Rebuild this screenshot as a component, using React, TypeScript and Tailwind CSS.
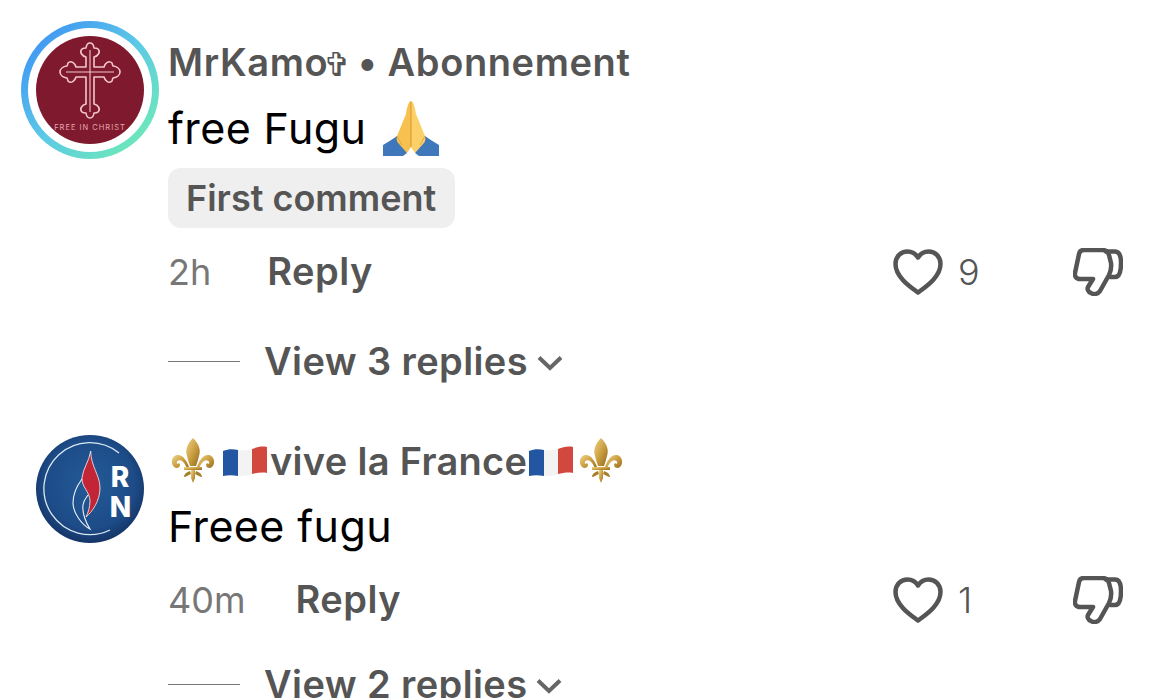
const font = "font-['Inter','Liberation_Sans',sans-serif]";

const ChristAvatar = () => (
  <div className="w-[138px] h-[138px] shrink-0 rounded-full p-[7px] bg-[linear-gradient(135deg,#3f95f4_10%,#5cc9e6_50%,#6eeab6_90%)]">
    <div className="w-full h-full rounded-full bg-white p-[8px]">
      <svg viewBox="0 0 108 108" className="w-[108px] h-[108px] block">
        <circle cx="54" cy="54" r="54" fill="#7f1a2e" />
        <path
          d="M50 31V21C46 20 43 16 46 13C47 12 48.500 12 50 12C50.500 8 52 7 54 7C56 7 57.500 8 58 12C59.500 12 61 12 62 13C65 16 62 20 58 21V31H68C69 27 73 24 76 27C76.500 28.500 76.500 29 77 30C81 30.500 84 33 84 36C84 39 81 41.500 77 42C76.500 43 76.500 43.500 76 45C73 48 69 45 68 41H58V68C62 69 65 73 62 76C61 77 59.500 77 58 77C57.500 81 56 82 54 82C52 82 50.500 81 50 77C48.500 77 47 77 46 76C43 73 46 69 50 68V41H40C39 45 35 48 32 45C31.500 43.500 31.500 43 31 42C27 41.500 24 39 24 36C24 33 27 30.500 31 30C31.500 29 31.500 28.500 32 27C35 24 39 27 40 31Z"
          fill="none"
          stroke="#f3c6cd"
          strokeWidth="1.600"
          strokeLinejoin="round"
        />
        <path d="M54 14V76M30 36H78" stroke="#f3c6cd" strokeWidth="1.100" />
        <text x="54" y="94" textAnchor="middle" fill="#e5a6af" fontSize="7.500" letterSpacing="1" fontFamily="Inter, sans-serif">
          FREE IN CHRIST
        </text>
      </svg>
    </div>
  </div>
);

const RnAvatar = () => (
  <div className="w-[138px] h-[138px] shrink-0 flex items-center justify-center">
    <svg viewBox="0 0 108 108" className="w-[108px] h-[108px] block">
      <defs>
        <radialGradient id="rn" cx="50%" cy="45%" r="55%">
          <stop offset="0%" stopColor="#235a97" />
          <stop offset="75%" stopColor="#1d4c88" />
          <stop offset="100%" stopColor="#153567" />
        </radialGradient>
      </defs>
      <circle cx="54" cy="54" r="54" fill="url(#rn)" />
      <path d="M83 18A46 46 0 1 0 74 95" fill="none" stroke="#dbe8f3" strokeWidth="1.300" />
      <path d="M54.700 16C53 27 47 33 46 43C45.500 52 54 57 54 66C54 72 52 78 50 82C56 77 64 66 64 53C64 40 55 32 54.700 16Z" fill="#c22535" stroke="#f4f4f4" strokeWidth="0.800" />
      <path d="M46 44C40 52 37 60 37 68C37 78 46 90 54 94C50 88 46 78 47 70C48 64 51 62 52 60" fill="none" stroke="#eef3f8" strokeWidth="1.100" />
      <text x="84" y="52" textAnchor="middle" fill="#fff" fontSize="28" fontWeight="800" fontFamily="Inter, sans-serif">R</text>
      <text x="84.500" y="82" textAnchor="middle" fill="#fff" fontSize="28" fontWeight="800" fontFamily="Inter, sans-serif">N</text>
    </svg>
  </div>
);

const Praying = () => (
  <svg viewBox="0 0 56 56" className="w-[56px] h-[56px] block ml-[17px] shrink-0">
    <path d="M0 45C5 42 10 39 14 36L24 53L20 56H0Z" fill="#3f77bb" />
    <path d="M56 45C51 42 46 39 42 36L32 53L36 56H56Z" fill="#3f77bb" />
    <path d="M28 1C25 2 24 8 23 14L14 36C13 40 14 42 16 44L24 53L28 47Z" fill="#f7c14f" />
    <path d="M28 1C31 2 32 8 33 14L42 36C43 40 42 42 40 44L32 53L28 47Z" fill="#fbd068" />
    <path d="M28 2V47" stroke="#d9962c" strokeWidth="1" />
    <path d="M14 36L19 45M42 36L37 45" stroke="#e6a63c" strokeWidth="1" />
  </svg>
);

const Fleur = () => (
  <svg viewBox="0 0 44 46" className="w-[44px] h-[46px] block shrink-0">
    <defs>
      <linearGradient id="gold" x1="0" y1="0" x2="1" y2="1">
        <stop offset="0%" stopColor="#f1d487" />
        <stop offset="55%" stopColor="#c79a3c" />
        <stop offset="100%" stopColor="#8f6a20" />
      </linearGradient>
    </defs>
    <path d="M22 0C16 6 14 12 16 18C17 22 18 25 19 28H25C26 25 27 22 28 18C30 12 28 6 22 0Z" fill="url(#gold)" />
    <path d="M18 29C16 22 11 16 6 17C1 18 -1 25 3 29C5 31 9 30 9 27C9 25 7 25 6 26C5 23 8 21 11 23C14 25 15 28 16 31Z" fill="url(#gold)" />
    <path d="M26 29C28 22 33 16 38 17C43 18 45 25 41 29C39 31 35 30 35 27C35 25 37 25 38 26C39 23 36 21 33 23C30 25 29 28 28 31Z" fill="url(#gold)" />
    <path d="M13 29H31V32H13Z" fill="url(#gold)" />
    <path d="M20 32H24V40L22 45L20 40Z" fill="url(#gold)" />
    <path d="M19 33C16 34 13 36 13 39C15 39 17 37 20 36ZM25 33C28 34 31 36 31 39C29 39 27 37 24 36Z" fill="#a67f2c" />
  </svg>
);

const Flag = () => (
  <svg viewBox="0 0 44 31" className="w-[44px] h-[31px] block shrink-0">
    <path d="M0 5C5 3 10 3 15 4V30C10 29 5 29 0 30Z" fill="#2356a2" />
    <path d="M15 4C19 5 25 4 29 3V28C25 30 19 30 15 30Z" fill="#f3f3f3" />
    <path d="M29 3C34 1 39 0 44 1V27C39 26 34 27 29 28Z" fill="#d3483e" />
  </svg>
);

const Heart = () => (
  <svg viewBox="0 0 50 46" className="w-[50px] h-[46px] block shrink-0">
    <path
      d="M25 43.500C20 39.500 2.500 29 2.500 15C2.500 7.500 8 2.500 14.500 2.500C19 2.500 22.500 4.500 25 8.500C27.500 4.500 31 2.500 35.500 2.500C42 2.500 47.500 7.500 47.500 15C47.500 29 30 39.500 25 43.500Z"
      fill="none"
      stroke="#555555"
      strokeWidth="4.500"
      strokeLinejoin="round"
    />
  </svg>
);

const ThumbDown = () => (
  <svg viewBox="0 0 50 48" className="w-[50px] h-[48px] block shrink-0">
    <path
      d="M11 2H29C33 2 35 3.500 36 7L38 15C38.500 19 38 23 36 27L27 43C25 46 21 47 18 45C15 44 14 41 15 39L20 31H7C3 31 1.500 28 2 25L6 6C6.500 3.500 8 2 11 2Z"
      fill="none"
      stroke="#555555"
      strokeWidth="4.500"
      strokeLinejoin="round"
    />
    <path d="M33 3.500H42C46 3.500 48 8 48 15C48 24 46 29 42 29H37" fill="none" stroke="#555555" strokeWidth="4.500" strokeLinecap="round" />
  </svg>
);

const Actions = ({ time, count, gap }: { time: string; count: string; gap: string }) => (
  <div className="h-[40px] flex items-center justify-between w-[955px]">
    <div className={`flex items-center ${gap}`}>
      <span className="text-[36px] text-[#777777] font-normal">{time}</span>
      <span className="text-[38px] tracking-[0.5px] text-[#555555] font-semibold mb-[2px]">Reply</span>
    </div>
    <div className="flex items-center">
      <Heart />
      <span className="w-[130px] pl-[15px] text-[36px] font-light text-[#555555]">{count}</span>
      <ThumbDown />
    </div>
  </div>
);

const ViewReplies = ({ label }: { label: string }) => (
  <div className="h-[40px] flex items-center">
    <div className="w-[72px] h-px bg-[#777777]" />
    <span className="ml-[24px] text-[38px] tracking-[0.4px] font-semibold text-[#555555]">{label}</span>
    <svg viewBox="0 0 26 16" className="ml-[9px] mt-[4px] w-[26px] h-[16px] block">
      <path d="M2 2.500L13 13L24 2.500" fill="none" stroke="#666666" strokeWidth="4" />
    </svg>
  </div>
);

export default function App() {
  return (
    <div className={`w-[1170px] h-[698px] overflow-hidden bg-white ${font}`}>
      <div className="flex gap-[9px] pl-[21px] pt-[21px]">
        <ChristAvatar />
        <div className="flex flex-col items-start pt-[21px]">
          <div className="h-[40px] flex items-center text-[38px] tracking-[0.6px] font-semibold text-[#555555] whitespace-pre">
            <span>
              MrKam<span className="tracking-[-4.4px]">o</span>
              <span className="font-['DejaVu_Sans'] text-[33px] font-normal tracking-[-3.4px]">✞</span> • Abonnement
            </span>
          </div>
          <div className="mt-[22px] h-[48px] flex items-center text-[43px] tracking-[0.4px] text-black">
            <span>free Fugu</span>
            <Praying />
          </div>
          <div className="mt-[16px] h-[60px] pl-[18px] pr-[19px] flex items-center rounded-[13px] bg-[#efefef] text-[36px] font-semibold text-[#555555]">
            First comment
          </div>
          <div className="mt-[24px]">
            <Actions time="2h" count="9" gap="gap-[56px]" />
          </div>
          <div className="mt-[49px]">
            <ViewReplies label="View 3 replies" />
          </div>
        </div>
      </div>
      <div className="flex gap-[9px] pl-[21px] mt-[39px]">
        <RnAvatar />
        <div className="flex flex-col items-start pt-[21px]">
          <div className="h-[40px] flex items-center text-[38px] tracking-[0.3px] font-semibold text-[#555555] whitespace-pre">
            <span className="ml-[3px]"><Fleur /></span>
            <span className="ml-[8px]"><Flag /></span>
            <span className="ml-[3px]">vive la France</span>
            <span className="ml-[2px]"><Flag /></span>
            <span className="ml-[6px]"><Fleur /></span>
          </div>
          <div className="mt-[21px] h-[48px] flex items-center text-[43px] tracking-[0.4px] text-black">Freee fugu</div>
          <div className="mt-[30px]">
            <Actions time="40m" count="1" gap="gap-[50px]" />
          </div>
          <div className="mt-[44px]">
            <ViewReplies label="View 2 replies" />
          </div>
        </div>
      </div>
    </div>
  );
}
